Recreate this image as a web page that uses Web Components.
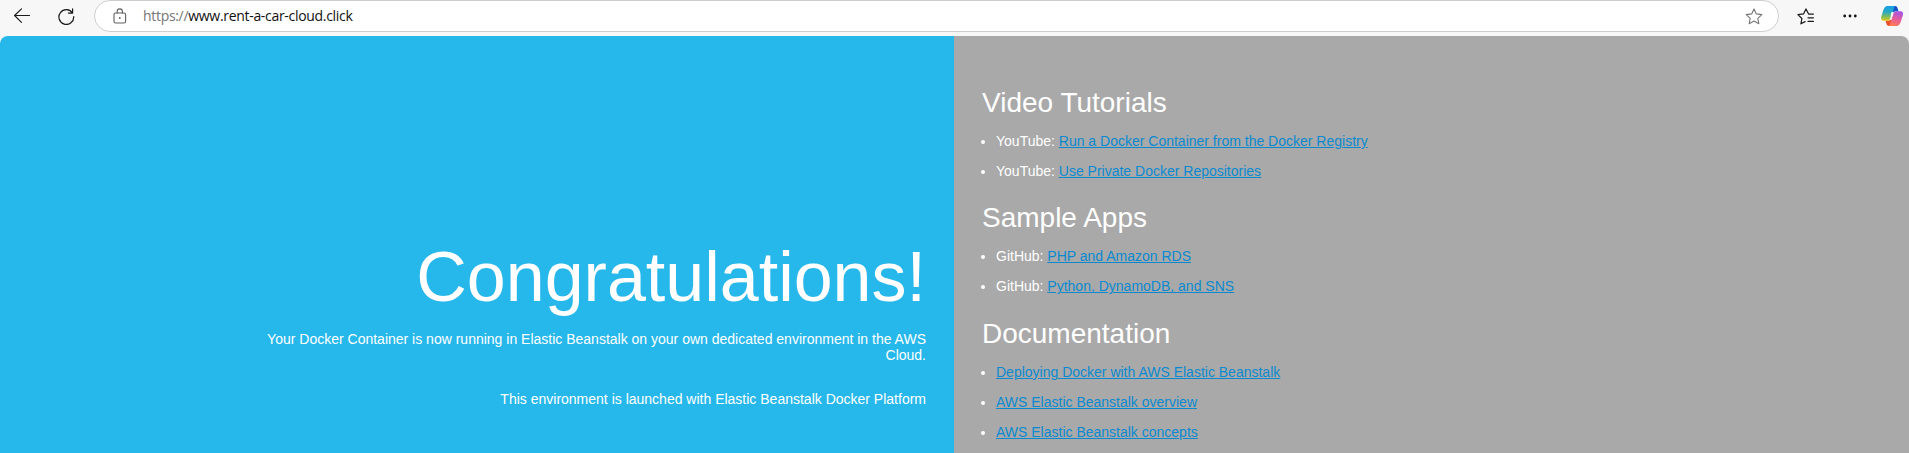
<!DOCTYPE html>
<html lang="en">
<head>
<meta charset="utf-8">
<title>Welcome</title>
<style>
html,body{margin:0;height:100%;overflow:hidden;background:#f7f7f7}
</style>
</head>
<body>
<browser-window>
  <browser-bar slot="bar"></browser-bar>
  <text-column>
    <congrats-message></congrats-message>
  </text-column>
  <links-column>
    <link-section heading="Video Tutorials">
      <link-item prefix="YouTube: ">Run a Docker Container from the Docker Registry</link-item>
      <link-item prefix="YouTube: ">Use Private Docker Repositories</link-item>
    </link-section>
    <link-section heading="Sample Apps">
      <link-item prefix="GitHub: ">PHP and Amazon RDS</link-item>
      <link-item prefix="GitHub: ">Python, DynamoDB, and SNS</link-item>
    </link-section>
    <link-section heading="Documentation">
      <link-item>Deploying Docker with AWS Elastic Beanstalk</link-item>
      <link-item>AWS Elastic Beanstalk overview</link-item>
      <link-item>AWS Elastic Beanstalk concepts</link-item>
    </link-section>
  </links-column>
</browser-window>
<script>
const define = (name, render) => customElements.define(name, class extends HTMLElement {
  constructor() {
    super();
    this.attachShadow({ mode: 'open' });
  }
  connectedCallback() {
    this.shadowRoot.innerHTML = render(this);
  }
});

define('browser-window', () => `
<style>
:host{display:flex;flex-direction:column;height:100vh;background:#f7f7f7}
main{flex:1;min-height:0;display:grid;grid-template-columns:954px 1fr;border-radius:8px 8px 0 0;overflow:hidden;
 font:14px/16px "Liberation Sans",Arial,sans-serif;color:#fff}
</style>
<slot name="bar"></slot><main><slot></slot></main>`);

define('browser-bar', () => `
<style>
:host{display:flex;align-items:center;box-sizing:border-box;height:36px;padding:0 5px 4px 14px;background:#f7f7f7}
svg{display:block;flex:none;fill:none;stroke-linecap:round;stroke-linejoin:round}
.reload{margin-left:28px}
.address{flex:1;display:flex;align-items:center;box-sizing:border-box;height:32px;margin:0 18px 0 19px;padding:0 15px 0 18px;
 background:#fff;border:1px solid #cecece;border-radius:16px}
.url{flex:1;margin-left:16px;font:14px/20px "Open Sans","Noto Sans",sans-serif;letter-spacing:-.31px;color:#111;white-space:pre}
.url span{color:#767676}
.more{margin:0 23px 0 28px}
</style>
<svg width="16" height="16" viewBox="0 0 16 16" stroke="#1a1a1a" stroke-width="1.1"><path d="M15.5 7.5H.6M7.5.8.6 7.5l6.9 6.8"/></svg>
<svg class="reload" width="17" height="17" viewBox="0 0 17 17" stroke="#1a1a1a" stroke-width="1.2"><path d="M14.6 5.1A7.4 7.4 0 1 0 15.700 8.500M14.600.9v4.200h-4.200"/></svg>
<div class="address">
  <svg width="14" height="16" viewBox="0 0 14 16" stroke="#5f5f5f" stroke-width="1.1"><rect x="1" y="5" width="11.6" height="10" rx="1.6"/><path d="M4.2 5V3.5a2.6 2.6 0 0 1 5.2 0V5"/><circle cx="6.8" cy="10" r=".9" fill="#5f5f5f" stroke="none"/></svg>
  <div class="url"><span>https://</span>www.rent-a-car-cloud.click</div>
  <svg width="18" height="17" viewBox="0 0 18 17" stroke="#777" stroke-width="1.1"><path d="M9 .9l2.3 5 5.5.7-4 3.7 1 5.4L9 13.1l-4.8 2.6 1-5.4-4-3.7 5.5-.7z"/></svg>
</div>
<svg width="18" height="17" viewBox="0 0 18 17" stroke="#1a1a1a" stroke-width="1.2"><path d="M16.4 6.1h-4.8L9 .9 6.5 5.9l-5.6.7 4 3.9-1 5.3 4.2-2.2M11 9.8h5.4M11 13.4h5.4"/></svg>
<svg class="more" width="14" height="4" viewBox="0 0 14 4"><g fill="#111"><circle cx="1.7" cy="2" r="1.4"/><circle cx="7" cy="2" r="1.4"/><circle cx="12.3" cy="2" r="1.4"/></g></svg>
<svg width="24" height="22" viewBox="0 0 24 22">
  <defs>
    <linearGradient id="a" x1="0" y1="0" x2="0" y2="1"><stop offset="0" stop-color="#169ee8"/><stop offset=".4" stop-color="#29a9c4"/><stop offset=".7" stop-color="#78bb62"/><stop offset="1" stop-color="#e6c814"/></linearGradient>
    <linearGradient id="b" x1=".6" y1="0" x2=".3" y2="1"><stop offset="0" stop-color="#a553e5"/><stop offset=".5" stop-color="#e55c9d"/><stop offset="1" stop-color="#ff7a52"/></linearGradient>
  </defs>
  <path fill="#1754c8" d="M11 1h4.200c1.600 0 2 1 2.500 2.600l.8 2.700h-2.800c-1.300 0-2 .8-2.400 2z"/>
  <path fill="#ed522c" d="M13 21H9.200c-1.800 0-2.400-1-2.900-2.700l-.8-2.600h2.800c1.300 0 2-.8 2.400-2z"/>
  <path fill="url(#a)" d="M14.800 1H7.700C5.300 1 4 2.900 3 6.100L1.300 11.600c-.8 2.600.2 4.200 2.500 4.200h4c1.700 0 2.500-1 3-2.500l3-9.600c.4-1.300.7-2.200 1-2.700z"/>
  <path fill="url(#b)" d="M9.300 21h7.100c2.400 0 3.700-1.900 4.600-5.100l1.800-5.500c.8-2.600-.2-4.200-2.500-4.200h-4c-1.700 0-2.500 1-3 2.500l-3 9.600c-.4 1.300-.7 2.200-1 2.700z"/>
  <path fill="#f7f7f7" d="M11.300 7.200h3.300c-1 .4-1.400 1-1.700 2l-1.300 4.100c-.3 1-.9 1.500-1.800 1.500H8.900c.8-.5 1.200-1 1.500-2z"/>
</svg>`);

define('text-column', () => `
<style>:host{display:block;background:#26b7eb;padding:201px 28px 0 252px;text-align:right}</style><slot></slot>`);

define('congrats-message', () => `
<style>
:host{display:block}
h1{margin:0 0 14px;font-size:70px;line-height:80px;font-weight:400}
p{margin:0 0 28px}
</style>
<h1>Congratulations!</h1>
<p>Your Docker Container is now running in Elastic Beanstalk on your own dedicated environment in the AWS Cloud.</p>
<p>This environment is launched with Elastic Beanstalk Docker Platform</p>`);

define('links-column', () => `
<style>:host{display:block;background:#a9a9a9;padding:51px 28px 0}</style><slot></slot>`);

define('link-section', el => `
<style>
:host{display:block;margin-bottom:23.4px}
h2{margin:0 0 14px;font-size:28px;line-height:32px;font-weight:400}
div{display:flex;flex-direction:column;gap:14px;padding-left:14px}
</style>
<h2>${el.getAttribute('heading')}</h2><div><slot></slot></div>`);

define('link-item', el => `
<style>
:host{display:block}
li{display:list-item;list-style:disc outside}
a{color:#0a89d0;text-decoration:underline}
</style>
<li>${el.getAttribute('prefix') || ''}<a><slot></slot></a></li>`);
</script>
</body>
</html>
